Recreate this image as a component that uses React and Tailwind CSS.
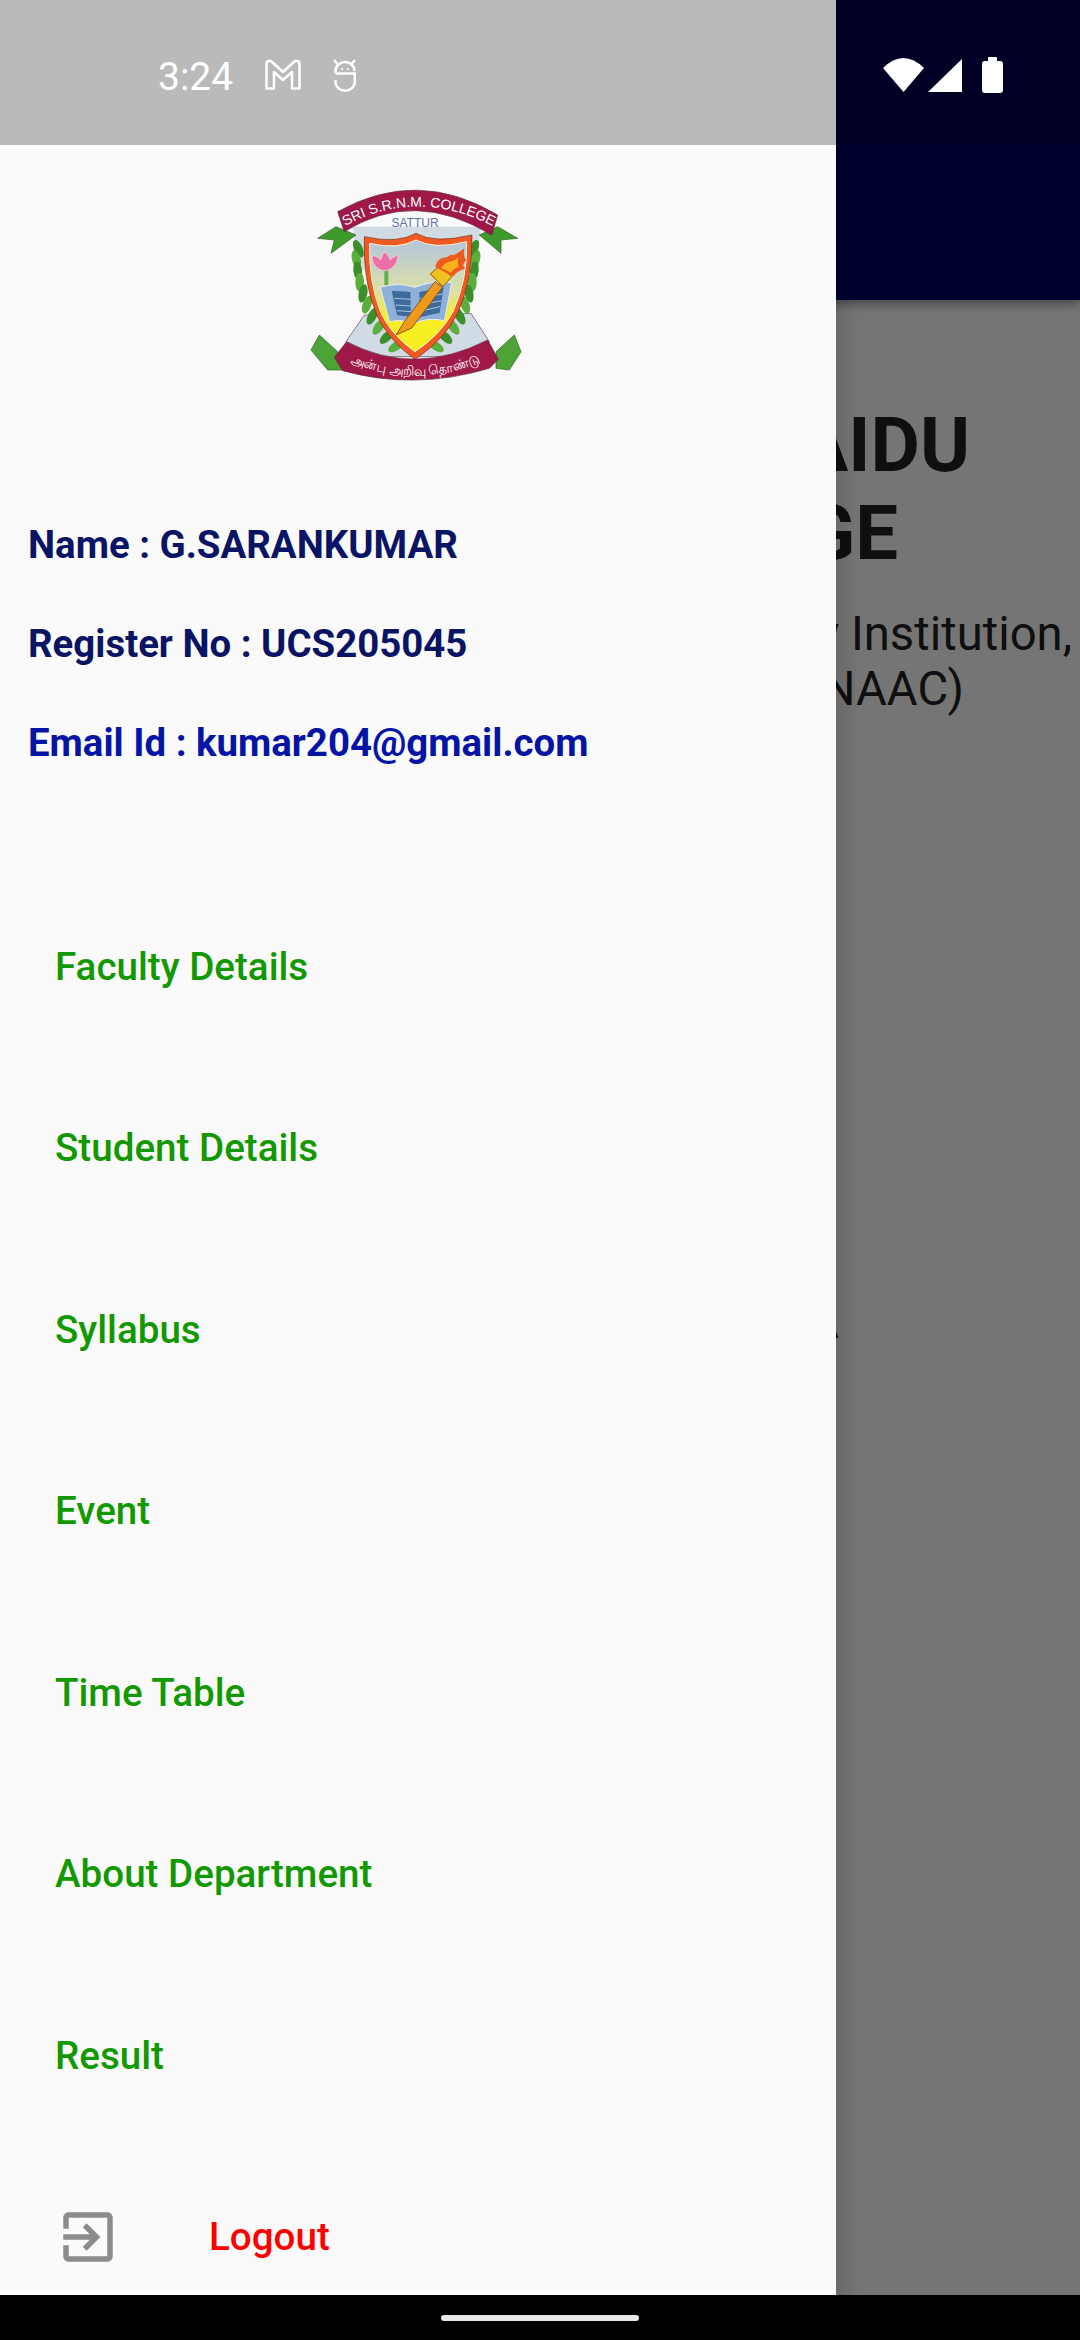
const menuItems = ["Faculty Details", "Student Details", "Syllabus", "Event", "Time Table", "About Department", "Result"];

const leaves = [
  [232, 236, 66, "#3a8f2a"], [226, 268, 76, "#5aae3c"], [230, 302, 84, "#3a8f2a"], [236, 336, 92, "#5aae3c"], [246, 370, 102, "#3a8f2a"], [258, 404, 110, "#5aae3c"],
  [274, 438, 118, "#3a8f2a"], [294, 470, 126, "#5aae3c"], [318, 500, 136, "#3a8f2a"], [346, 528, 146, "#5aae3c"],
];

function Logo() {
  return (
    <svg viewBox="0 0 840 660" className="h-[220px] w-[280px]">
      <defs>
        <linearGradient id="sky" x1="0" y1="0" x2="0" y2="1">
          <stop offset="0" stopColor="#b3c6da" />
          <stop offset="0.45" stopColor="#dcdfa8" />
          <stop offset="0.7" stopColor="#f7ef22" />
        </linearGradient>
        <path id="topCurve" d="M193 168 Q405 52 635 168" />
        <path id="bottomCurve" d="M195 572 Q400 662 615 572" />
      </defs>
      {/* pale backing */}
      <path d="M215 170 L600 170 L585 300 L235 300 Z" fill="#d0dbe4" />
      <path d="M250 435 L570 430 L625 515 L600 560 L220 560 L195 515 Z" fill="#d0dbe4" stroke="#5a4050" strokeWidth="2" />
      {/* ribbon tips */}
      <path d="M110 205 L165 170 L225 195 L150 250 L160 210 Z" fill="#3f9a2c" stroke="#2a5a20" strokeWidth="2" />
      <path d="M710 205 L650 170 L595 195 L660 250 L660 210 Z" fill="#3f9a2c" stroke="#2a5a20" strokeWidth="2" />
      <path d="M90 540 L115 495 L170 545 L185 600 L140 600 Z" fill="#4da336" stroke="#2a5a20" strokeWidth="2" />
      <path d="M720 545 L700 495 L645 545 L645 595 L685 600 Z" fill="#4da336" stroke="#2a5a20" strokeWidth="2" />
      {/* laurel */}
      {leaves.map(([x, y, r, c]) => (
        <g key={y}>
          <ellipse cx={x} cy={y} rx="28" ry="13" fill={c} transform={`rotate(${r} ${x} ${y})`} />
          <ellipse cx={810 - x} cy={y} rx="28" ry="13" fill={c} transform={`rotate(${-r} ${810 - x} ${y})`} />
        </g>
      ))}
      {/* shield */}
      <path d="M250 200 Q350 222 405 190 Q460 222 573 195 Q575 330 530 430 Q490 510 402 568 Q320 510 285 430 Q245 330 250 200 Z" fill="#ee5a22" stroke="#7a2a10" strokeWidth="2" />
      <path d="M266 220 Q350 240 405 210 Q460 240 557 215 Q560 330 516 425 Q478 495 402 545 Q330 495 298 425 Q262 330 266 220 Z" fill="url(#sky)" stroke="#fff3e0" strokeWidth="3" />
      {/* lotus */}
      <rect x="310" y="298" width="12" height="48" fill="#62b04a" />
      <path d="M272 258 Q290 256 298 270 Q305 250 312 246 Q322 252 328 270 Q338 256 352 256 Q348 285 330 296 Q312 308 292 296 Q275 285 272 258 Z" fill="#ec6fa6" stroke="#fbe3ef" strokeWidth="2" />
      {/* book */}
      <path d="M298 352 Q350 335 402 352 Q455 330 512 338 L490 452 Q440 440 396 462 Q360 445 326 456 Z" fill="#8fb0d8" stroke="#e8edf4" strokeWidth="3" />
      <path d="M332 362 L388 366 L390 440 L348 436 Z" fill="#3e6b9c" />
      <path d="M415 366 L488 352 L476 428 L416 442 Z" fill="#3e6b9c" />
      <path d="M340 385 L389 388 M344 405 L390 408 M347 422 L390 425 M416 386 L484 372 M416 405 L481 392 M416 424 L478 410" stroke="#a9c4e4" strokeWidth="3" />
      {/* torch */}
      <path d="M345 495 L370 455 L462 335 L484 352 L392 474 Z" fill="#f09a1c" stroke="#8a5a10" strokeWidth="3" />
      <path d="M448 312 L476 288 L512 320 L486 350 Z" fill="#f2c21c" stroke="#8a5a10" strokeWidth="3" />
      <path d="M462 290 Q470 262 498 262 Q508 250 518 256 Q530 250 550 235 Q546 262 556 270 Q540 282 552 296 Q528 302 516 320 Z" fill="#ee5a22" />
      <path d="M480 294 Q492 276 512 274 Q522 272 532 262 Q528 280 534 290 Q516 296 510 308 Z" fill="#f7b21c" />
      {/* banners */}
      <path d="M170 125 Q410 -9 650 135 L632 195 Q400 54 190 185 Z" fill="#a01848" stroke="#5a2a3a" strokeWidth="2" />
      <path d="M197 515 Q400 622 620 510 L652 568 L625 595 Q400 662 185 602 L160 562 Z" fill="#a01848" stroke="#5a2a3a" strokeWidth="2" />
      <text fontFamily="'Liberation Sans', sans-serif" fontSize="42" fill="#ffffff">
        <textPath href="#topCurve" startOffset="50%" textAnchor="middle">SRI S.R.N.M. COLLEGE</textPath>
      </text>
      <text x="402" y="170" textAnchor="middle" fontFamily="'Liberation Sans', sans-serif" fontSize="36" fill="#5a74a8">SATTUR</text>
      <text fontFamily="'Noto Sans', 'Noto Sans CJK SC', sans-serif" fontSize="39" fill="#ffffff">
        <textPath href="#bottomCurve" startOffset="50%" textAnchor="middle">அன்பு அறிவு தொண்டு</textPath>
      </text>
    </svg>
  );
}

function StatusBar() {
  return (
    <div className="absolute inset-x-0 top-0 flex h-[145px] items-center pl-[158px] pr-[77px] pt-[5px] text-white">
      <span className="mt-[5px] text-[39px] leading-none">3:24</span>
      <svg viewBox="0 0 38 32" className="ml-[31px] h-[32px] w-[38px]" fill="none" stroke="#ffffff" strokeWidth="2.5" strokeLinejoin="round">
        <path d="M2.5 29.5 V5 Q2.5 2 5 2 H7 L19 13 L31 2 H33 Q35.5 2 35.5 5 V29.5 H28 V13 L19 21 L10 13 V29.5 Z" />
      </svg>
      <svg viewBox="0 0 24 34" className="ml-[31px] h-[34px] w-[24px]" fill="none" stroke="#ffffff" strokeWidth="2.5">
        <path d="M1 2 L4.5 6 M22 2 L18.5 6" />
        <path d="M2.5 15 V13 A9.5 9 0 0 1 21.5 13 M2.5 15.5 H23 M2.5 22 V24 A9.5 8.5 0 0 0 21.8 24 V15.5" />
        <circle cx="9" cy="11" r="1.1" fill="#ffffff" stroke="none" />
        <circle cx="15" cy="11" r="1.1" fill="#ffffff" stroke="none" />
      </svg>
      <svg viewBox="0 -1 120 36" className="ml-auto h-[36px] w-[120px]" fill="#ffffff">
        <path d="M0 10 Q20.5 -10 41 10 L20.5 34 Z" />
        <path d="M79 1 V34 H45 Z" />
        <path d="M105 3 V0 Q105 -1 106 -1 H113 Q114 -1 114 0 V3 H117 Q120 3 120 6 V32 Q120 35 117 35 H102 Q99 35 99 32 V6 Q99 3 102 3 Z" />
      </svg>
    </div>
  );
}

export default function App() {
  return (
    <div className="relative flex h-[2340px] w-[1080px] flex-col overflow-hidden bg-black font-['Roboto',sans-serif]">
      <div className="relative flex-1 overflow-hidden bg-white text-[#212121]">
        {/* page behind the drawer */}
        <div className="h-[145px] bg-[#000052]" />
        <div className="h-[155px] bg-[#000066] shadow-[0_4px_10px_rgba(0,0,0,0.4)]" />
        <div className="pt-[101px] text-right">
          <h1 className="text-[76px] font-bold leading-[88px]">
            <span className="block pr-[110px]">S.R. NAIDU</span>
            <span className="block pr-[182px]">COLLEGE</span>
          </h1>
          <p className="mt-[30px] text-[47.25px] leading-[55px]">
            <span className="block pr-[8px]">(An Autonomous Minority Institution,</span>
            <span className="block pr-[116px]">Accredited by NAAC)</span>
          </p>
          <p className="mt-[578px] pr-[241px] text-[47.25px] leading-[55px]">A</p>
        </div>
        {/* scrim */}
        <div className="absolute inset-0 bg-black/54" />
        {/* drawer */}
        <div className="absolute inset-y-0 left-0 w-[836px] overflow-hidden bg-[#fafafa]">
          <div className="h-[145px] bg-[#bababa]" />
          <div className="mt-[25px] flex justify-center pl-[6px]">
            <Logo />
          </div>
          <div className="mt-[105px] pl-[28px] text-[38.4px] font-bold">
            <p className="flex h-[99px] items-center text-[#0a1464]">Name : G.SARANKUMAR</p>
            <p className="flex h-[99px] items-center text-[#0a1464]">Register No : UCS205045</p>
            <p className="flex h-[99px] items-center text-[#0414a4]">Email Id : kumar204@gmail.com</p>
          </div>
          <div className="mt-[84px] text-[38.6px] font-medium text-[#129800]">
            {menuItems.map((item) => (
              <div key={item} className="flex h-[181.5px] items-center pl-[55px]">{item}</div>
            ))}
          </div>
          <div className="flex h-[180px] items-center pl-[55px] text-[38.6px] font-medium text-[#ff0000]">
            <svg viewBox="0 0 24 24" className="h-[66px] w-[66px]" fill="#8c8c8c">
              <path d="M10.09 15.59L11.5 17l5-5-5-5-1.41 1.41L12.67 11H3v2h9.67l-2.58 2.59zM19 3H5c-1.11 0-2 .9-2 2v4h2V5h14v14H5v-4H3v4c0 1.1.89 2 2 2h14c1.1 0 2-.9 2-2V5c0-1.1-.9-2-2-2z" />
            </svg>
            <span className="ml-[88px]">Logout</span>
          </div>
        </div>
        {/* soft edge the drawer throws on the scrim */}
        <div className="absolute inset-y-0 left-[836px] w-[24px] bg-gradient-to-r from-black/10 to-transparent" />
      </div>
      {/* gesture bar */}
      <div className="flex h-[45px] items-center justify-center bg-black">
        <div className="h-[6px] w-[198px] rounded-full bg-[#e8e8e8]" />
      </div>
      <StatusBar />
    </div>
  );
}
